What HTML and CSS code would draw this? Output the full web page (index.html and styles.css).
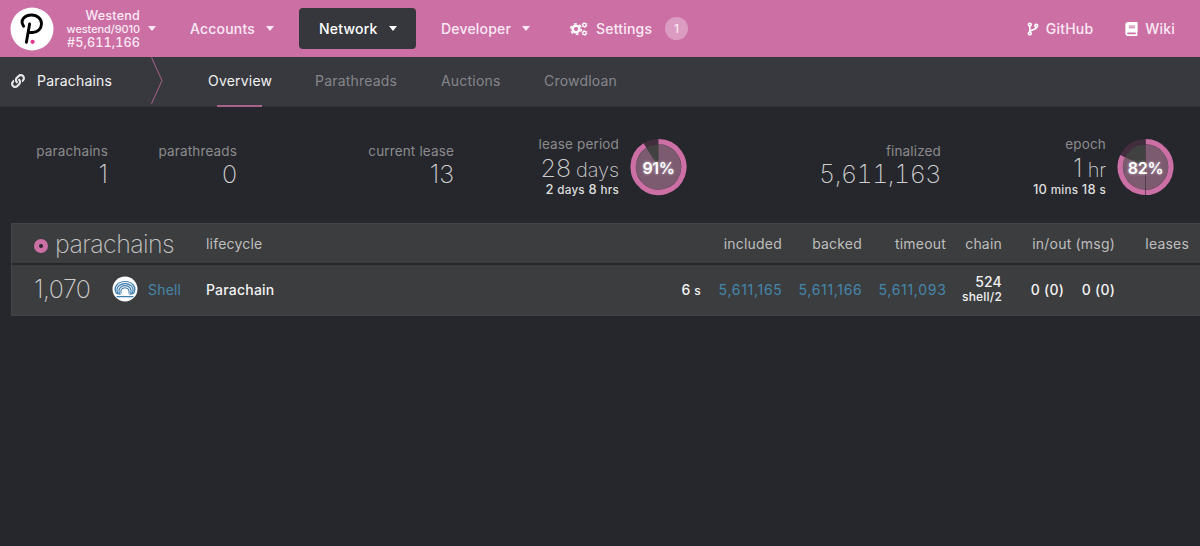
FILE: index.html
```html
<!DOCTYPE html>
<html lang="en">
<head>
  <meta charset="UTF-8">
  <meta name="viewport" content="width=device-width, initial-scale=1.0">
  <title>Parachains</title>
  <link rel="stylesheet" href="styles.css">
</head>
<body>
  <!-- Top bar -->
  <header class="topbar">
    <svg class="logo" viewBox="0 0 44 44">
      <circle cx="22" cy="22" r="21.5" fill="#fff"/>
      <path d="M13.600 19.200C9.500 13.500 14.500 8 21.500 8c6 0 10 4 10 8.800s-4 8.700-9 8.700h-3.500M19.600 17l-3.200 18.300" fill="none" stroke="#000" stroke-width="2.900" stroke-linecap="round"/>
      <circle cx="22.600" cy="34.800" r="2.100" fill="#e0358c"/>
    </svg>
    <div class="chain-info">
      <div>Westend</div>
      <div class="version">westend/9010</div>
      <div class="block">#5,611,166</div>
    </div>
    <span class="caret"></span>

    <nav class="menu">
      <a class="menu-item accounts">Accounts<span class="caret"></span></a>
      <a class="menu-item active">Network<span class="caret"></span></a>
      <a class="menu-item developer">Developer<span class="caret"></span></a>
      <a class="menu-item settings">
        <svg class="cogs" viewBox="0 0 18 14">
          <g fill="none" stroke="#fff">
            <circle cx="6" cy="7" r="3.300" stroke-width="2.400"/>
            <circle cx="6" cy="7" r="5.300" stroke-width="1.600" stroke-dasharray="2.800 2.750"/>
            <circle cx="14.500" cy="3" r="1.700" stroke-width="1.300"/>
            <circle cx="14.500" cy="3" r="2.600" stroke-width=".8" stroke-dasharray="1.360 1.360"/>
            <circle cx="14.500" cy="11" r="1.700" stroke-width="1.300"/>
            <circle cx="14.500" cy="11" r="2.600" stroke-width=".8" stroke-dasharray="1.360 1.360"/>
          </g>
        </svg>
        Settings<span class="badge">1</span>
      </a>
    </nav>

    <div class="links">
      <a>
        <svg class="branch" viewBox="0 0 12 14" fill="none" stroke="#fff" stroke-width="1.600">
          <circle cx="2.800" cy="2.600" r="1.400"/>
          <circle cx="2.800" cy="11.400" r="1.400"/>
          <circle cx="9.300" cy="3.800" r="1.400"/>
          <path d="M2.800 4v6M9.300 5.200c0 3.300-6 1.800-6.300 4.600"/>
        </svg>
        GitHub
      </a>
      <a>
        <svg class="book" viewBox="0 0 448 512"><path fill="#fff" d="M448 360V24c0-13.300-10.700-24-24-24H96C43 0 0 43 0 96v320c0 53 43 96 96 96h328c13.300 0 24-10.700 24-24v-16c0-7.500-3.500-14.300-8.900-18.700-4.200-15.400-4.200-59.300 0-74.700 5.400-4.300 8.900-11.100 8.900-18.600zM128 134c0-3.300 2.700-6 6-6h212c3.300 0 6 2.700 6 6v20c0 3.300-2.700 6-6 6H134c-3.300 0-6-2.700-6-6v-20zm0 64c0-3.300 2.700-6 6-6h212c3.300 0 6 2.700 6 6v20c0 3.300-2.700 6-6 6H134c-3.300 0-6-2.700-6-6v-20zm253.400 250H96c-17.700 0-32-14.300-32-32 0-17.600 14.400-32 32-32h285.400c-1.900 17.100-1.900 46.900 0 64z"/></svg>
        Wiki
      </a>
    </div>
  </header>

  <!-- Tabs -->
  <div class="tabs">
    <svg class="link-icon" viewBox="0 0 512 512"><path fill="#e6e6e6" d="M326.600 185.400c59.700 59.800 58.900 155.700.4 214.600-.1.100-.2.300-.4.400l-67.200 67.200c-59.300 59.300-155.700 59.300-215 0-59.300-59.300-59.300-155.700 0-215l37.100-37.100c9.800-9.800 26.800-3.300 27.300 10.600.6 17.700 3.800 35.500 9.700 52.700 2 5.800.6 12.300-3.800 16.600l-13.100 13.100c-28 28-28.900 73.700-1.200 102 28 28.600 74.100 28.700 102.300.5l67.200-67.200c28.200-28.200 28.100-73.800 0-101.800-3.700-3.700-7.400-6.600-10.300-8.600a16 16 0 0 1-6.900-12.600c-.4-10.600 3.300-21.500 11.700-29.800l21.100-21.100c5.500-5.500 14.200-6.200 20.600-1.700a152.500 152.500 0 0 1 20.500 17.200zM467.500 44.400c-59.300-59.300-155.600-59.300-215 0l-67.200 67.200c-.1.100-.3.300-.4.400-58.600 58.900-59.400 154.800.4 214.600a152.500 152.500 0 0 0 20.500 17.200c6.400 4.500 15.100 3.800 20.600-1.700l21.100-21.100c8.400-8.400 12.100-19.200 11.700-29.800a16 16 0 0 0-6.900-12.600c-2.900-2-6.600-4.900-10.300-8.600-28.100-28.100-28.200-73.600 0-101.800l67.200-67.200c28.200-28.200 74.300-28.100 102.300.5 27.800 28.300 26.900 73.900-1.200 102l-13.100 13.100c-4.400 4.400-5.800 10.800-3.800 16.600 5.900 17.200 9 35 9.700 52.700.5 13.900 17.500 20.400 27.300 10.600l37.100-37.100c59.300-59.300 59.300-155.700 0-215z"/></svg>
    <span class="tabs-title">Parachains</span>
    <svg class="divider" viewBox="0 0 12 48"><path d="M.5.500l10.500 23L.5 46.800" fill="none" stroke="#a8638d"/></svg>
    <a class="tab selected">Overview</a>
    <a class="tab parathreads">Parathreads</a>
    <a class="tab auctions">Auctions</a>
    <a class="tab crowdloan">Crowdloan</a>
  </div>

  <!-- Summary -->
  <section class="summary">
    <div class="stat s-parachains"><label>parachains</label><div class="value">1</div></div>
    <div class="stat s-parathreads"><label>parathreads</label><div class="value">0</div></div>
    <div class="stat s-lease"><label>current lease</label><div class="value">13</div></div>
    <div class="stat timed s-period">
      <label>lease period</label>
      <div class="value">28 <small>days</small></div>
      <div class="remaining">2 <small>days</small> 8 <small>hrs</small></div>
    </div>
    <div class="progress">
      <svg viewBox="0 0 58 58">
        <circle cx="29" cy="29" r="28.500" fill="#412d3e"/>
        <circle cx="29" cy="29" r="23" fill="#414141"/>
        <path d="M29 29V6A23 23 0 1 1 16.700 9.600z" fill="#7c5a70"/>
        <path d="M29 3.200A25.800 25.800 0 1 1 15.200 7.200" fill="none" stroke="#cb6fa5" stroke-width="5.400"/>
      </svg>
      <span>91%</span>
    </div>
    <div class="stat s-finalized"><label>finalized</label><div class="value wide">5,611,163</div></div>
    <div class="stat timed s-epoch">
      <label>epoch</label>
      <div class="value">1 <small>hr</small></div>
      <div class="remaining">10 <small>mins</small> 18 <small>s</small></div>
    </div>
    <div class="progress">
      <svg viewBox="0 0 58 58">
        <circle cx="29" cy="29" r="28.500" fill="#412d3e"/>
        <circle cx="29" cy="29" r="23" fill="#414141"/>
        <path d="M29 29V6A23 23 0 1 1 8.200 19.200z" fill="#7c5a70"/>
        <path d="M29 3.200A25.800 25.800 0 1 1 5.700 18" fill="none" stroke="#cb6fa5" stroke-width="5.400"/>
        <path d="M29 .5v57" stroke="#4a3544" stroke-width=".8"/>
      </svg>
      <span>82%</span>
    </div>
  </section>

  <!-- Parachains table -->
  <div class="table">
    <div class="row head">
      <div class="title"><i class="dot"></i><h1>parachains</h1></div>
      <div class="cell lifecycle">lifecycle</div>
      <div class="cell c-included">included</div>
      <div class="cell c-backed">backed</div>
      <div class="cell c-timeout">timeout</div>
      <div class="cell c-chain">chain</div>
      <div class="cell c-msg">in/out (msg)</div>
      <div class="cell c-leases">leases</div>
    </div>
    <div class="row body">
      <div class="id">1,070</div>
      <svg class="shell" viewBox="0 0 26 26">
        <circle cx="13" cy="13" r="12.500" fill="#fff"/>
        <g fill="none" stroke="#3f7fae" stroke-width="1.200">
          <path d="M4.200 17C1 11 6 5.500 13 5.500S25 11 21.800 17"/>
          <path d="M5.800 17.300C3 12 7.500 7.600 13 7.600s10 4.400 7.200 9.700"/>
          <path d="M7.600 17.500C5.500 13 9 9.700 13 9.700s7.500 3.300 5.400 7.800"/>
          <path d="M9.200 17.500C8 14 10 11.800 13 11.800s5 2.200 3.800 5.700"/>
          <path d="M4 17.200l4.500 1.200M22 17.200l-4.500 1.200M4.500 20.600h17"/>
        </g>
        <circle cx="13" cy="16" r="3.200" fill="#fff"/>
      </svg>
      <a class="name">Shell</a>
      <div class="cell lifecycle">Parachain</div>
      <div class="cell age">6 <small>s</small></div>
      <div class="cell c-included"><a>5,611,165</a></div>
      <div class="cell c-backed"><a>5,611,166</a></div>
      <div class="cell c-timeout"><a>5,611,093</a></div>
      <div class="cell c-chain">524<div class="spec">shell/2</div></div>
      <div class="cell c-in">0 (0)</div>
      <div class="cell c-out">0 (0)</div>
    </div>
  </div>
</body>
</html>
```
FILE: styles.css
```css
* {
  box-sizing: border-box;
}

body {
  margin: 0;
  height: 546px;
  overflow: hidden;
  background: #26272c;
  color: #f2f2f2;
  font-family: Inter, sans-serif;
  font-size: 14px;
  font-weight: 450;
  letter-spacing: 0.2px;
  white-space: nowrap;
}

/* Top bar */
.topbar {
  display: flex;
  align-items: center;
  height: 57px;
  padding-left: 10px;
  background: #cb6fa5;
  color: #fbeaf4;
}

.logo {
  width: 44px;
  height: 44px;
}

.chain-info {
  width: 86px;
  margin-right: 8px;
  padding-top: 2px;
  text-align: right;
  font-size: 12.6px;
  line-height: 14px;
}

.chain-info .version {
  font-size: 11px;
  line-height: 13px;
  letter-spacing: -0.1px;
}

.chain-info .block {
  font-variant-numeric: tabular-nums;
  letter-spacing: 0.1px;
}

.caret {
  display: inline-block;
  border: 4px solid transparent;
  border-top: 5px solid currentColor;
  border-bottom: 0;
}

.menu {
  display: flex;
  align-items: center;
}

.menu-item {
  display: flex;
  align-items: center;
}

.menu-item .caret {
  margin-left: 11px;
}

.menu-item.accounts {
  width: 109px;
  margin-left: 34px;
}

.menu-item.active {
  width: 117px;
  height: 41px;
  padding-left: 20px;
  border-radius: 4px;
  background: #36373c;
  color: #fff;
}

.menu-item.developer {
  width: 129px;
  margin-left: 25px;
}

.cogs {
  width: 18px;
  height: 14px;
  margin-right: 8px;
}

.badge {
  width: 23px;
  height: 23px;
  margin-left: 13px;
  border-radius: 50%;
  background: #dc9bc1;
  font-size: 12px;
  line-height: 23px;
  text-align: center;
}

.links {
  display: flex;
  gap: 32px;
  margin-left: auto;
  padding-right: 25px;
}

.links a {
  display: flex;
  align-items: center;
}

.branch {
  width: 12px;
  height: 14px;
  margin-right: 7px;
}

.book {
  width: 13px;
  height: 14px;
  margin-right: 7px;
}

/* Tabs */
.tabs {
  display: flex;
  align-items: center;
  height: 50px;
  padding: 0 0 2px 11px;
  background: #38393e;
  border-bottom: 1px solid #303136;
  font-weight: 400;
}

.link-icon {
  width: 14px;
  height: 14px;
  margin-right: 12px;
}

.tabs-title {
  width: 114px;
}

.divider {
  width: 12px;
  height: 48px;
}

.tab {
  width: 107px;
  color: #85868a;
}

.tab.selected {
  display: flex;
  flex-direction: column;
  justify-content: center;
  align-items: flex-start;
  height: 47px;
  margin-left: 45px;
  color: #f2f2f2;
}

.tab.selected::after {
  content: "";
  width: 45px;
  height: 2px;
  margin: 16px 0 -18px 9px;
  background: #a8638d;
}

.tab.parathreads {
  width: 126px;
}

.tab.auctions {
  width: 103px;
}

/* Summary */
.summary {
  display: flex;
  align-items: center;
  height: 116px;
  padding-top: 3px;
}

.stat {
  padding-bottom: 3px;
  text-align: right;
}

.stat label {
  display: block;
  height: 18px;
  color: #8b8b8d;
  font-size: 13.5px;
  font-weight: 400;
  letter-spacing: 0.15px;
  line-height: 18px;
}

.stat .value {
  color: #cfcfd0;
  font-size: 25px;
  font-weight: 200;
  letter-spacing: 0;
  line-height: 28px;
}

.stat .value.wide {
  letter-spacing: -0.5px;
  font-variant-numeric: tabular-nums;
}

.stat .value small {
  font-size: 20px;
  letter-spacing: -0.1px;
}

.stat.timed {
  padding-bottom: 2px;
}

.stat.timed label {
  height: 19px;
  line-height: 17px;
}

.stat.timed .value {
  word-spacing: -2px;
  line-height: 27px;
}

.remaining {
  margin-top: -1px;
  color: #dedede;
  font-size: 13px;
  line-height: 12px;
}

.remaining small {
  font-size: 11.7px;
}

.s-parachains {
  width: 108px;
}

.s-parathreads {
  width: 129px;
}

.s-lease {
  width: 217px;
}

.s-period {
  width: 165px;
}

.s-finalized {
  width: 254px;
}

.s-epoch {
  width: 165px;
}

.progress {
  display: grid;
  place-items: center;
  width: 57px;
  height: 58px;
  margin-left: 11px;
}

.progress > * {
  grid-area: 1 / 1;
}

.progress svg {
  width: 57px;
  height: 58px;
}

.progress span {
  padding-top: 2px;
  color: #fff;
  font-size: 16px;
  font-weight: 600;
  letter-spacing: -0.3px;
  text-shadow: 0 0 3px #ffffff99;
}

/* Table */
.table {
  margin-left: 11px;
  border: solid #434446;
  border-width: 1px 0 1px 1px;
  background: #3c3d3f;
}

.row {
  display: flex;
  align-items: center;
}

.row.head {
  height: 39px;
  color: #bebebe;
  font-weight: 400;
}

.row.body {
  height: 52px;
  padding: 0 0 2px 22px;
  border-top: 2px solid #26272a;
}

.title {
  display: flex;
  align-items: center;
  width: 194px;
  padding-left: 22px;
}

.title h1 {
  margin: 0 0 0 7px;
  color: #c6c6c6;
  font-size: 25px;
  font-weight: 200;
  letter-spacing: -0.6px;
}

.dot {
  width: 14px;
  height: 14px;
  margin-top: 4px;
  border: 5px solid #cb6fa5;
  border-radius: 50%;
  background: #26272c;
}

.id {
  flex: none;
  width: 78px;
  color: #cfcfcf;
  font-size: 25px;
  font-weight: 200;
  letter-spacing: -0.5px;
}

.shell {
  flex: none;
  width: 26px;
  height: 26px;
}

.name {
  flex: none;
  width: 68px;
  padding-left: 10px;
}

.row a {
  color: #4586ab;
  font-weight: 400;
}

.cell a {
  letter-spacing: 0.7px;
  margin-right: -0.5px;
}

.cell {
  flex: none;
  text-align: right;
}

.cell.lifecycle {
  flex: 1;
  text-align: left;
}

.age {
  width: 60px;
}

.age small {
  font-size: 12px;
}

.c-included {
  width: 81px;
}

.c-backed {
  width: 80px;
}

.c-timeout {
  width: 84px;
}

.c-chain {
  width: 56px;
  line-height: 16px;
}

.spec {
  font-size: 12px;
  line-height: 14px;
}

.c-msg {
  width: 113px;
}

.c-in {
  width: 62px;
}

.c-out {
  width: 51px;
  margin-right: 85px;
}

.c-leases {
  width: 74px;
  margin-right: 11px;
}
```
